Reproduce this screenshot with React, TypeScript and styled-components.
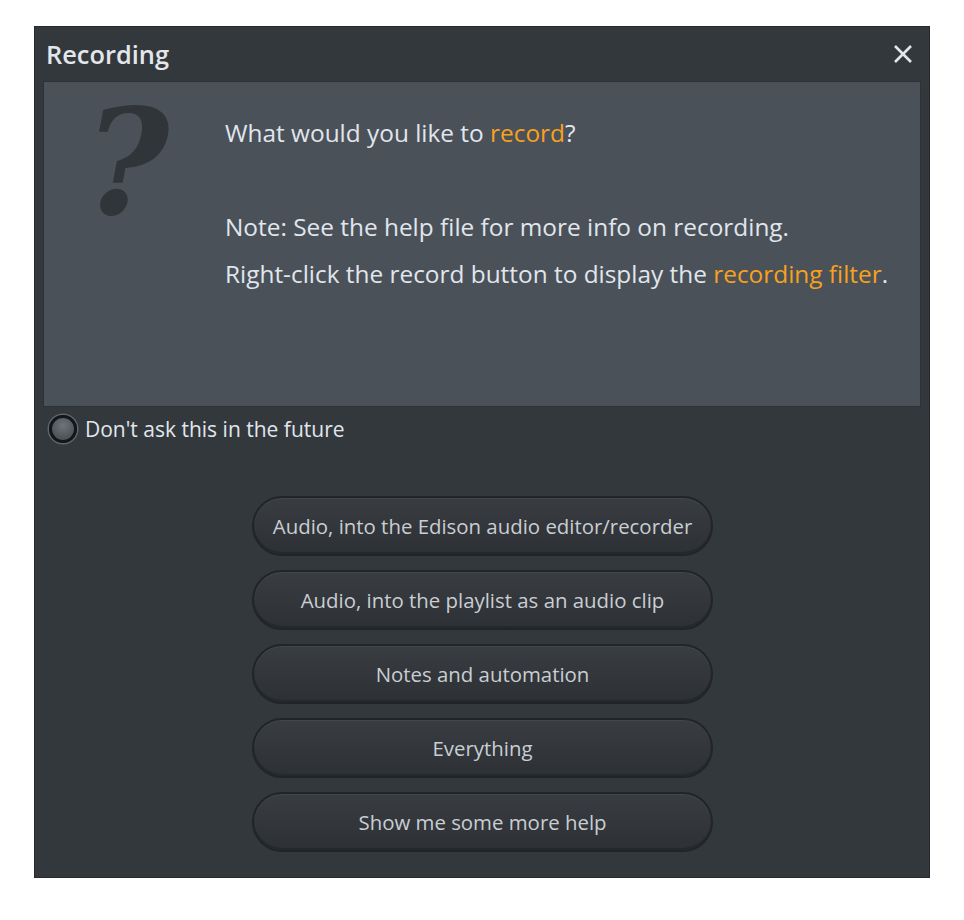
import React from "react";
import styled, { createGlobalStyle } from "styled-components";

const Global = createGlobalStyle`
  html, body { margin: 0; padding: 0; background: #ffffff; }
  body { font-family: "Open Sans", "Noto Sans", sans-serif; }
`;

const Page = styled.div`
  padding: 26px 0 0 34px;
`;

const Dialog = styled.div`
  width: 896px;
  height: 852px;
  box-sizing: border-box;
  background: #33383d;
  border: 1px solid #25292d;
  display: flex;
  flex-direction: column;
`;

const TitleBar = styled.div`
  height: 54px;
  display: flex;
  align-items: center;
  justify-content: space-between;
  padding: 0 14px 0 11px;
`;

const Title = styled.div`
  font-size: 25.4px;
  font-weight: 600;
  color: #e3e7eb;
  margin-top: -1px;
`;

const Close = styled.div`
  width: 24px;
  height: 24px;
  display: flex;
  align-items: center;
  justify-content: center;
`;

const Panel = styled.div`
  margin: 0 8px;
  height: 326px;
  box-sizing: border-box;
  background: #4a5159;
  border: 1px solid #2d3136;
  display: flex;
`;

const Mark = styled.div`
  width: 181px;
  flex: none;
  font-family: "DejaVu Serif", "Liberation Serif", serif;
  font-weight: 700;
  font-style: italic;
  font-size: 146px;
  line-height: 1;
  color: #30353a;
  padding: 8px 0 0 40px;
  box-sizing: border-box;
`;

const Message = styled.div`
  padding-top: 27px;
  font-size: 24.4px;
  line-height: 47px;
  color: #e0e6ec;
`;

const Line = styled.div`
  height: 47px;
  white-space: nowrap;
`;

const Hi = styled.span`
  color: #f7a11d;
`;

const CheckRow = styled.label`
  display: flex;
  align-items: center;
  gap: 8px;
  margin: 8px 0 0 14px;
  font-size: 21px;
  color: #e0e6ec;
`;

const Radio = styled.span`
  width: 28px;
  height: 28px;
  border-radius: 50%;
  box-sizing: border-box;
  border: 3px solid #141618;
  background: radial-gradient(circle at 50% 35%, #6f747a 0%, #555a60 55%, #43474c 100%);
  box-shadow: 0 0 0 1.5px #5f656b;
`;

const Buttons = styled.div`
  margin-top: 53px;
  display: flex;
  flex-direction: column;
  align-items: center;
  gap: 14px;
  padding-left: 1px;
`;

const Button = styled.button`
  width: 461px;
  height: 60px;
  border-radius: 30px;
  box-sizing: border-box;
  border: 2px solid #222528;
  background: linear-gradient(#393d42, #2d3034);
  box-shadow: inset 0 1px 0 #42474c, inset 0 -2px 0 #26292c;
  color: #c9ced3;
  font-family: "Open Sans", "Noto Sans", sans-serif;
  font-size: 20.4px;
  padding: 0;
  cursor: pointer;
`;

const labels = [
  "Audio, into the Edison audio editor/recorder",
  "Audio, into the playlist as an audio clip",
  "Notes and automation",
  "Everything",
  "Show me some more help",
];

export default function App() {
  return (
    <Page>
      <Global />
      <Dialog>
        <TitleBar>
          <Title>Recording</Title>
          <Close>
            <svg width="20" height="20" viewBox="0 0 20 20">
              <path d="M2 2 L18 18 M18 2 L2 18" stroke="#e3e7eb" strokeWidth="2.6" strokeLinecap="butt" />
            </svg>
          </Close>
        </TitleBar>
        <Panel>
          <Mark>?</Mark>
          <Message>
            <Line>
              What would you like to <Hi>record</Hi>?
            </Line>
            <Line />
            <Line>Note: See the help file for more info on recording.</Line>
            <Line>
              Right-click the record button to display the <Hi>recording filter</Hi>.
            </Line>
          </Message>
        </Panel>
        <CheckRow>
          <Radio />
          Don't ask this in the future
        </CheckRow>
        <Buttons>
          {labels.map((l) => (
            <Button key={l}>{l}</Button>
          ))}
        </Buttons>
      </Dialog>
    </Page>
  );
}
